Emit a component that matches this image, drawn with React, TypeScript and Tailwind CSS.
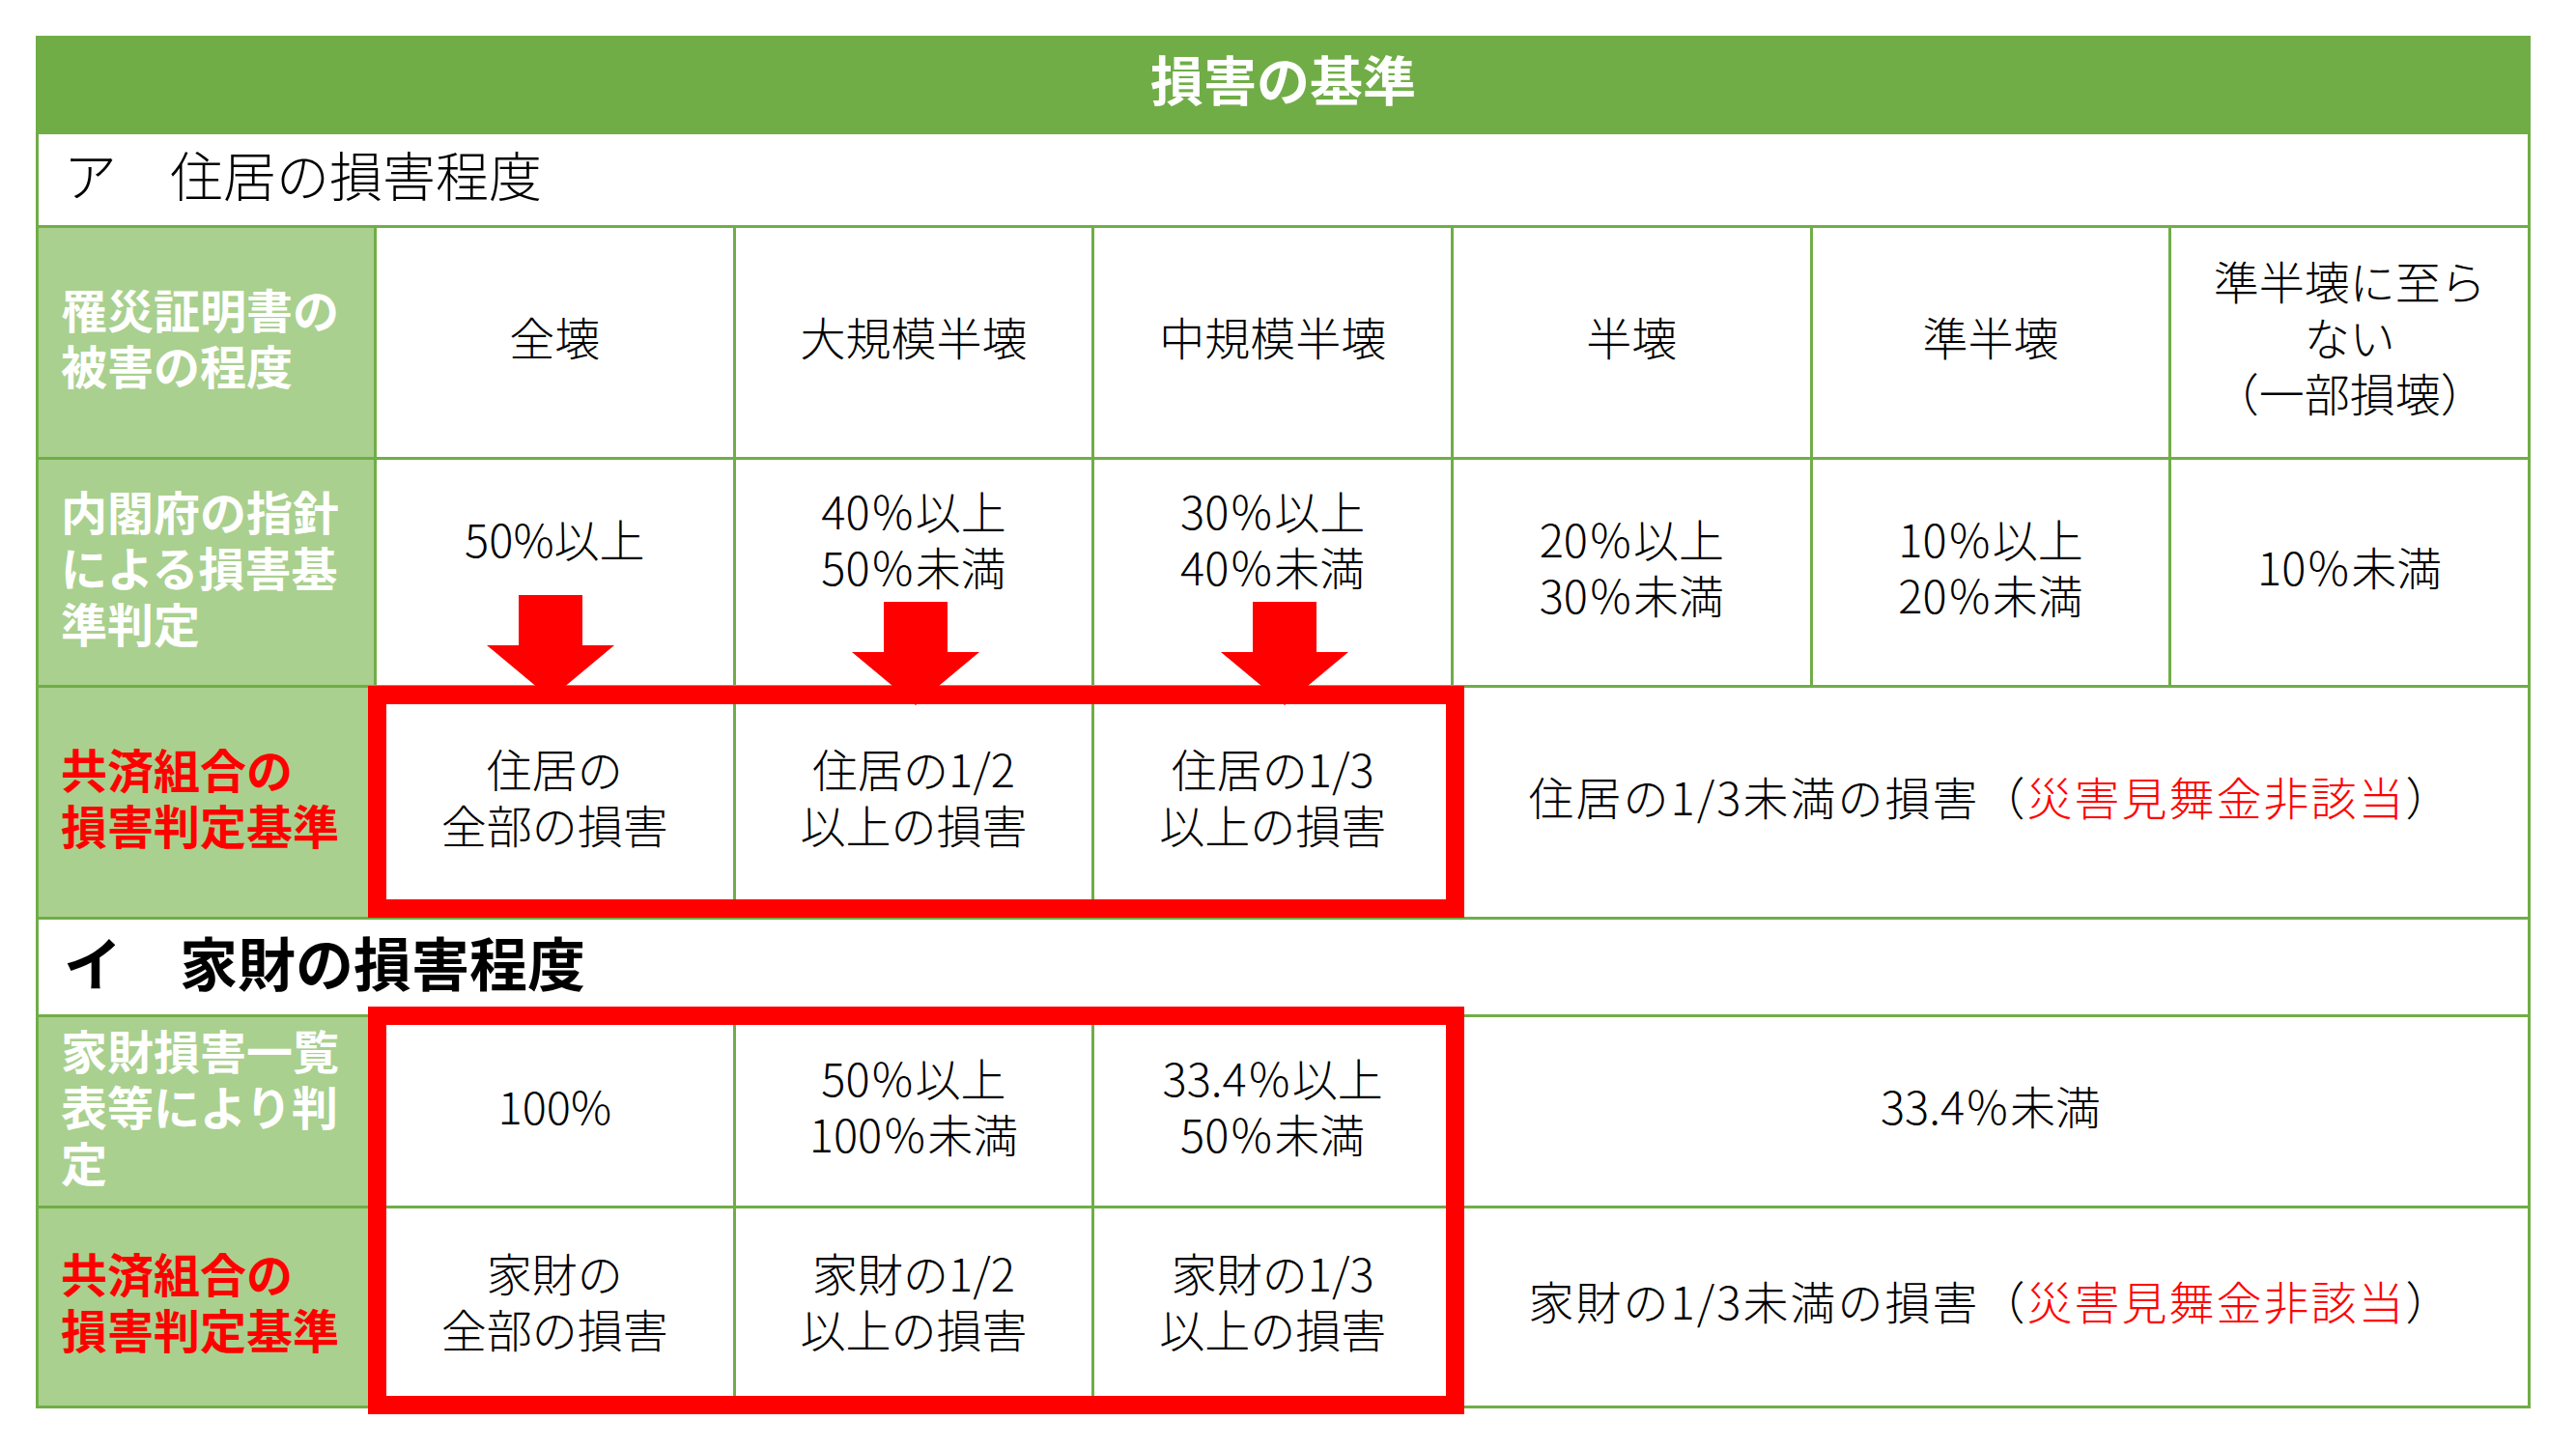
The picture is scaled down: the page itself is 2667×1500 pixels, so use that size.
import React from 'react';

function Label({ children, red }: { children: React.ReactNode; red?: boolean }) {
  return (
    <div
      className={`bg-[#A9D08E] flex items-center pl-[23px] pr-1 pb-[14px] font-bold text-[48px] leading-[58px] ${
        red ? 'text-[#FF0000]' : 'text-white'
      }`}
    >
      <div>{children}</div>
    </div>
  );
}

function Cell({
  children,
  className = 'pb-[14px]',
}: {
  children: React.ReactNode;
  className?: string;
}) {
  return (
    <div
      className={`bg-white flex items-center justify-center text-center text-[47px] leading-[58px] font-light text-black ${className}`}
    >
      <div>{children}</div>
    </div>
  );
}

function DownArrow({ className }: { className: string }) {
  // red block arrow pointing into the box below
  return (
    <svg
      className={`absolute ${className}`}
      width="132"
      height="107"
      viewBox="0 0 132 107"
    >
      <polygon
        points="33,0 99,0 99,52 132,52 66,107 0,52 33,52"
        fill="#FF0000"
      />
    </svg>
  );
}

function NotCovered({ what }: { what: string }) {
  return (
    <>
      {what}の1/3未満の損害（<span className="text-[#FF0000]">災害見舞金非該当</span>）
    </>
  );
}

export default function App() {
  return (
    <div className="min-h-screen bg-white pl-[37px] pt-[37px] font-['Noto_Sans_CJK_JP','Noto_Sans',sans-serif]">
      <div className="relative w-[2583px]">
        <div className="grid grid-cols-[347px_repeat(6,1fr)] grid-rows-[96px_94px_237px_233px_237px_98px_195px_204px] gap-[3px] p-[3px] bg-[#70AD47]">
          {/* title */}
          <div className="col-span-7 bg-[#70AD47] flex items-center justify-center pb-[16px] text-white font-bold text-[55px]">
            損害の基準
          </div>

          {/* ア */}
          <div className="col-span-7 bg-white flex items-center pl-[26px] pb-[14px] text-[55px] font-light text-black">
            ア　住居の損害程度
          </div>

          <Label>
            罹災証明書の
            <br />
            被害の程度
          </Label>
          <Cell>全壊</Cell>
          <Cell>大規模半壊</Cell>
          <Cell>中規模半壊</Cell>
          <Cell>半壊</Cell>
          <Cell>準半壊</Cell>
          <Cell>
            準半壊に至ら
            <br />
            ない
            <br />
            （一部損壊）
          </Cell>

          <Label>
            内閣府の指針
            <br />
            による損害基
            <br />
            準判定
          </Label>
          <Cell className="pb-[72px]">50%以上</Cell>
          <Cell className="pb-[72px]">
            40％以上
            <br />
            50％未満
          </Cell>
          <Cell className="pb-[72px]">
            30％以上
            <br />
            40％未満
          </Cell>
          <Cell>
            20％以上
            <br />
            30％未満
          </Cell>
          <Cell>
            10％以上
            <br />
            20％未満
          </Cell>
          <Cell>10％未満</Cell>

          <Label red>
            共済組合の
            <br />
            損害判定基準
          </Label>
          <Cell>
            住居の
            <br />
            全部の損害
          </Cell>
          <Cell>
            住居の1/2
            <br />
            以上の損害
          </Cell>
          <Cell>
            住居の1/3
            <br />
            以上の損害
          </Cell>
          <Cell className="col-span-3 pb-[14px] tracking-[2px]">
            <NotCovered what="住居" />
          </Cell>

          {/* イ */}
          <div className="col-span-7 bg-white flex items-center pl-[26px] pb-[12px] text-[60px] font-bold text-black">
            イ　家財の損害程度
          </div>

          <Label>
            家財損害一覧
            <br />
            表等により判
            <br />
            定
          </Label>
          <Cell>100%</Cell>
          <Cell>
            50％以上
            <br />
            100％未満
          </Cell>
          <Cell>
            33.4％以上
            <br />
            50％未満
          </Cell>
          <Cell className="col-span-3 pb-[14px]">33.4％未満</Cell>

          <Label red>
            共済組合の
            <br />
            損害判定基準
          </Label>
          <Cell>
            家財の
            <br />
            全部の損害
          </Cell>
          <Cell>
            家財の1/2
            <br />
            以上の損害
          </Cell>
          <Cell>
            家財の1/3
            <br />
            以上の損害
          </Cell>
          <Cell className="col-span-3 pb-[14px] tracking-[2px]">
            <NotCovered what="家財" />
          </Cell>
        </div>

        {/* red overlays */}
        <DownArrow className="left-[467px] top-[579px]" />
        <DownArrow className="left-[845px] top-[586px]" />
        <DownArrow className="left-[1227px] top-[586px]" />
        <div className="absolute left-[344px] top-[673px] w-[1135px] h-[240px] border-[19px] border-[#FF0000]" />
        <div className="absolute left-[344px] top-[1005px] w-[1135px] h-[422px] border-[19px] border-[#FF0000]" />
      </div>
    </div>
  );
}
